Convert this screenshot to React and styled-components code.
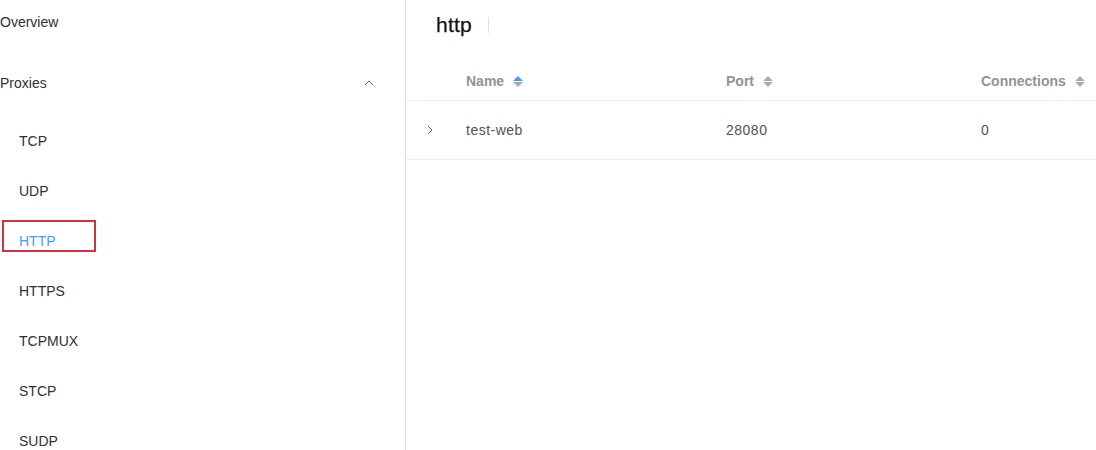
import React from "react";
import styled, { createGlobalStyle } from "styled-components";

const Global = createGlobalStyle`
  html, body { margin: 0; padding: 0; background: #fff; }
  body { font-family: "Liberation Sans", Arial, sans-serif; color: #303133; }
  * { box-sizing: border-box; }
`;

const Page = styled.div`
  display: flex;
  width: 1096px;
  height: 450px;
  overflow: hidden;
  position: relative;
`;

const Sidebar = styled.nav`
  width: 406px;
  flex: none;
  border-right: 1px solid #dcdfe6;
  display: flex;
  flex-direction: column;
  position: relative;
  overflow: hidden;
`;

const TopItem = styled.div`
  flex: none;
  height: ${(p) => p.$h}px;
  margin-top: ${(p) => p.$mt || 0}px;
  display: flex;
  align-items: center;
  justify-content: space-between;
  padding: 0 30px 0 0;
  font-size: 14px;
  color: #303133;
`;

const SubList = styled.div`
  flex: none;
  display: flex;
  flex-direction: column;
  padding-top: 5px;
`;

const SubItem = styled.div`
  height: 50px;
  flex: none;
  display: flex;
  align-items: center;
  padding-left: 19px;
  font-size: 14px;
  color: ${(p) => (p.$active ? "#409eff" : "#303133")};
`;

const Highlight = styled.div`
  position: absolute;
  left: 2px;
  top: 220px;
  width: 94px;
  height: 32px;
  border: 2px solid #d5303b;
  pointer-events: none;
`;

const Main = styled.main`
  flex: 1;
  display: flex;
  flex-direction: column;
`;

const TitleBar = styled.div`
  height: 50px;
  display: flex;
  align-items: center;
  padding-left: 30px;
  gap: 16px;
`;

const Title = styled.span`
  font-size: 21px;
  color: #111;
  letter-spacing: 0.2px;
  -webkit-text-stroke: 0.25px #111;
`;

const Divider = styled.span`
  width: 1px;
  height: 16px;
  background: #dcdfe6;
`;

const Table = styled.div`
  margin-top: 12px;
  display: flex;
  flex-direction: column;
`;

const Row = styled.div`
  display: grid;
  grid-template-columns: 48px 260px 255px 1fr;
  height: ${(p) => p.$h}px;
  align-items: center;
  border-bottom: 1px solid #ebeef5;
`;

const Cell = styled.div`
  padding-left: ${(p) => (p.$pad ?? 12)}px;
  display: flex;
  align-items: center;
  font-size: 14px;
  color: ${(p) => (p.$head ? "#909399" : "#505257")};
  font-weight: ${(p) => (p.$head ? 700 : 400)};
  letter-spacing: ${(p) => (p.$head ? 0 : 0.5)}px;
  white-space: nowrap;
`;

const Caret = styled.span`
  display: inline-flex;
  flex-direction: column;
  gap: 1px;
  margin-left: 9px;
`;

const Tri = styled.span`
  width: 0;
  height: 0;
  border-left: 5px solid transparent;
  border-right: 5px solid transparent;
  ${(p) =>
    p.$up
      ? `border-bottom: 5px solid ${p.$on ? "#409eff" : "#a8abb2"};`
      : `border-top: 5px solid ${p.$on ? "#409eff" : "#a8abb2"};`}
`;

const SortCaret = ({ asc }) => (
  <Caret>
    <Tri $up $on={asc} />
    <Tri />
  </Caret>
);

const Chevron = ({ dir }) => (
  <svg width="12" height="12" viewBox="0 0 12 12" fill="none">
    {dir === "up" ? (
      <polyline points="2,8 6,4 10,8" stroke="#606266" strokeWidth="1" />
    ) : (
      <polyline points="4,2 8,6 4,10" stroke="#606266" strokeWidth="1" />
    )}
  </svg>
);

const subs = ["TCP", "UDP", "HTTP", "HTTPS", "TCPMUX", "STCP", "SUDP"];

export default function App() {
  return (
    <>
      <Global />
      <Page>
        <Sidebar>
          <TopItem $h={44}>Overview</TopItem>
          <TopItem $h={56} $mt={11}>
            <span>Proxies</span>
            <Chevron dir="up" />
          </TopItem>
          <SubList>
            {subs.map((s) => (
              <SubItem key={s} $active={s === "HTTP"}>
                {s}
              </SubItem>
            ))}
          </SubList>
          <Highlight />
        </Sidebar>
        <Main>
          <TitleBar>
            <Title>http</Title>
            <Divider />
          </TitleBar>
          <Table>
            <Row $h={39}>
              <Cell />
              <Cell $head>
                Name
                <SortCaret asc />
              </Cell>
              <Cell $head>
                Port
                <SortCaret />
              </Cell>
              <Cell $head>
                Connections
                <SortCaret />
              </Cell>
            </Row>
            <Row $h={59}>
              <Cell $pad={18}>
                <Chevron dir="right" />
              </Cell>
              <Cell>test-web</Cell>
              <Cell>28080</Cell>
              <Cell>0</Cell>
            </Row>
          </Table>
        </Main>
      </Page>
    </>
  );
}
